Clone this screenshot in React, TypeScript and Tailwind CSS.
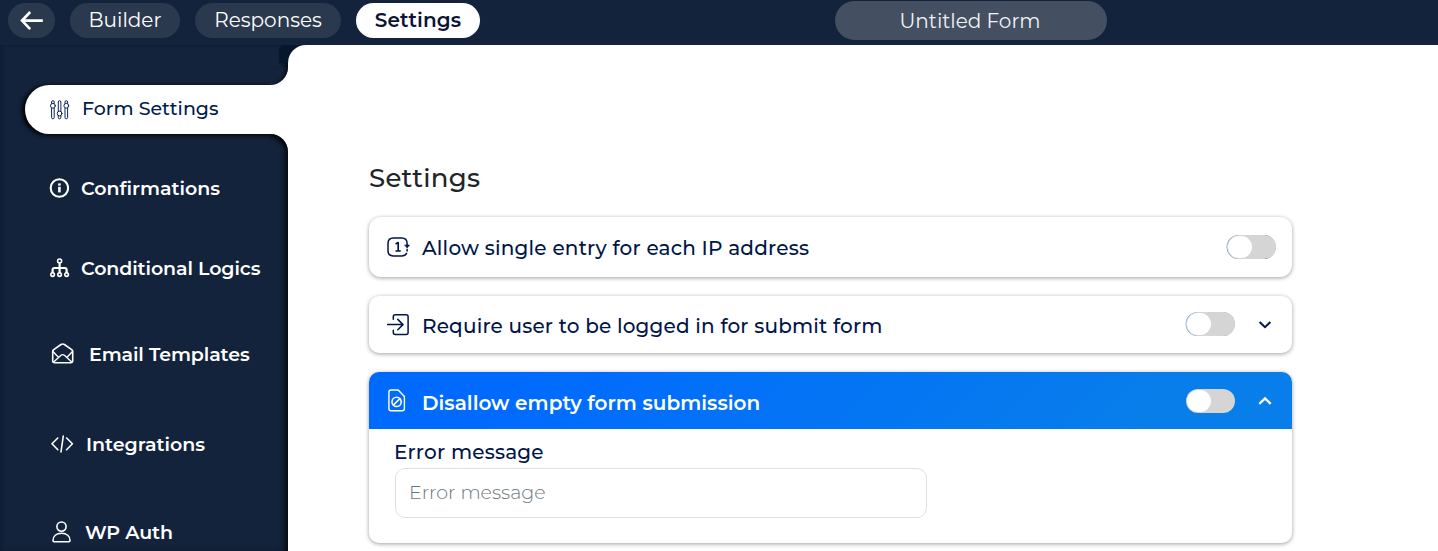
import type { ReactNode } from "react";

const stroke = {
  fill: "none",
  stroke: "currentColor",
  strokeLinecap: "round" as const,
  strokeLinejoin: "round" as const,
};

function BackIcon() {
  return (
    <svg width="24" height="20" viewBox="0 0 24 20" {...stroke} strokeWidth="2.6">
      <path d="M22.8 9.6H2M10.2 1L2 9.6l8.2 8.6" strokeLinecap="butt" strokeLinejoin="miter" />
    </svg>
  );
}

function SlidersIcon() {
  return (
    <svg width="20" height="20" viewBox="0 0 20 20" {...stroke} strokeWidth="0.95">
      <path d="M1.6 3.4V2a1.3 1.3 0 0 1 2.6 0v1.4M1.6 8.3v9.2a1.3 1.3 0 0 0 2.6 0V8.3" />
      <circle cx="2.9" cy="5.8" r="2.4" />
      <path d="M8.3 11V2a1.3 1.3 0 0 1 2.6 0v9M8.3 16v1.5a1.3 1.3 0 0 0 2.6 0V16" />
      <circle cx="9.6" cy="13.5" r="2.4" />
      <path d="M15 3.4V2a1.3 1.3 0 0 1 2.6 0v1.4M15 8.3v9.2a1.3 1.3 0 0 0 2.6 0V8.3" />
      <circle cx="16.3" cy="5.8" r="2.4" />
    </svg>
  );
}

function InfoIcon() {
  return (
    <svg width="20" height="20" viewBox="0 0 20 20" {...stroke} strokeWidth="2.1">
      <circle cx="10.4" cy="10" r="8.7" />
      <path d="M10.4 8.8v5.6" strokeWidth="2.6" strokeLinecap="butt" />
      <path d="M10.4 5.4v2.2" strokeWidth="2.6" strokeLinecap="butt" />
    </svg>
  );
}

function TreeIcon() {
  return (
    <svg width="20" height="20" viewBox="0 0 20 20" {...stroke} strokeWidth="1.6">
      <circle cx="9.6" cy="3" r="2" />
      <path d="M9.6 5v9.5M2.6 14.5v-2.7q0-1.8 1.8-1.8h10.4q1.8 0 1.8 1.8v2.7" strokeWidth="2.2" />
      <circle cx="2.6" cy="16.6" r="1.8" />
      <circle cx="9.6" cy="16.6" r="1.8" />
      <circle cx="16.6" cy="16.6" r="1.8" />
    </svg>
  );
}

function MailOpenIcon() {
  return (
    <svg width="23" height="21" viewBox="0 0 23 21" {...stroke} strokeWidth="1.6">
      <path d="M1.7 8.2q0-.8.7-1.4L10 1.5q1.7-1 3.4 0L21 6.8q.7.6.7 1.4v9.6q0 1.9-1.9 1.9H3.6q-1.9 0-1.9-1.9z" />
      <path d="M1.9 8.6l5.5 5.6M21.5 8.6l-5.5 5.6M2.7 19l7.3-6.7q1.7-1.4 3.4 0l7.3 6.7" strokeWidth="1.4" />
    </svg>
  );
}

function CodeIcon() {
  return (
    <svg width="23" height="18" viewBox="0 0 23 18" {...stroke} strokeWidth="1.6">
      <path d="M6.8 3L1 8.8l5.8 5.9M15.6 3l5.8 5.8-5.8 5.9M12.3 1L10 17" />
    </svg>
  );
}

function UserIcon() {
  return (
    <svg width="20" height="22" viewBox="0 0 20 22" {...stroke} strokeWidth="1.6">
      <circle cx="9.5" cy="5.6" r="4.6" />
      <path d="M1 19.6c0-4.4 3.2-7.3 8.5-7.3s8.5 2.9 8.5 7.3q0 1.1-1.1 1.1H2.1Q1 20.7 1 19.6z" />
    </svg>
  );
}

function SingleEntryIcon() {
  return (
    <svg width="23" height="21" viewBox="0 0 23 21" {...stroke} strokeWidth="1.5">
      <path d="M20.1 8.2V6.4Q20.1 1 14.7 1H6.4Q1 1 1 6.4v7.1q0 5.4 5.4 5.4h8.3q3.6 0 4.9-2.5M20.1 12.6v1.3" />
      <path d="M17.9 8h4.6l-2.3 3z" fill="currentColor" strokeWidth=".6" />
      <path d="M8.6 7l2.6-1.4v8.3M8.4 14h5.4" strokeWidth="1.7" strokeLinecap="butt" />
    </svg>
  );
}

function LoginIcon() {
  return (
    <svg width="23" height="22" viewBox="0 0 23 22" {...stroke} strokeWidth="1.5">
      <path d="M6.3 5.2V2.8q0-2 2-2h10.8q2 0 2 2v15.8q0 2-2 2H8.3q-2 0-2-2v-2.4" />
      <path d="M.6 10.6h15.2M10.8 5.4l5.2 5.2-5.2 5.2" />
    </svg>
  );
}

function FileBlockIcon() {
  return (
    <svg width="18" height="24" viewBox="0 0 18 24" {...stroke} strokeWidth="1.4">
      <path d="M3 1h7.2l6.2 6.6v12q0 2.2-2.2 2.2H3Q.9 21.8.9 19.6V3.2Q.9 1 3 1z" />
      <circle cx="8.6" cy="12.9" r="4.6" strokeWidth="1.6" />
      <path d="M5.5 15.9l6.2-6" strokeWidth="1.6" />
    </svg>
  );
}

function Chevron({ up = false }: { up?: boolean }) {
  return (
    <svg width="14" height="10" viewBox="0 0 14 10" {...stroke} strokeWidth={up ? 2.3 : 2}>
      <path d={up ? "M1.3 7.8L7 2.3l5.7 5.5" : "M1.6 2L7 7.2 12.4 2"} strokeLinecap="butt" strokeLinejoin="miter" />
    </svg>
  );
}

function Toggle({ edge }: { edge: string }) {
  return (
    <span className={`flex h-6 w-[49px] shrink-0 items-center rounded-full bg-[#d5d5d5] pl-px ${edge}`}>
      <span className="h-[22px] w-6 rounded-full bg-white" />
    </span>
  );
}

type NavItem = { label: string; icon: ReactNode; row: string; text: string };

const items: NavItem[] = [
  { label: "Confirmations", icon: <InfoIcon />, row: "h-20 pl-[49px] gap-3", text: "pt-0.5" },
  { label: "Conditional Logics", icon: <TreeIcon />, row: "h-20 pl-[50px] gap-[11px]", text: "pt-0.5 tracking-[-0.1px]" },
  { label: "Email Templates", icon: <MailOpenIcon />, row: "h-[91px] pl-[51px] gap-[15px]", text: "pt-1 tracking-[-0.1px]" },
  { label: "Integrations", icon: <CodeIcon />, row: "h-[89px] pl-[51px] gap-3", text: "pt-1" },
  { label: "WP Auth", icon: <UserIcon />, row: "h-[87px] pl-[52px] gap-[13px]", text: "pt-1 tracking-[-0.1px]" },
];

const card = "rounded-[10px] bg-white shadow-[0_1px_4px_rgba(0,0,0,0.38)]";

export default function App() {
  return (
    <div className="flex h-[551px] w-[1438px] flex-col overflow-hidden bg-white font-['Montserrat','Inter',sans-serif]">
      <header className="flex h-[45px] shrink-0 items-start bg-[#13233b] pl-2 text-[20px] leading-[35px] text-white">
        <button className="mt-[3px] flex h-[35px] w-[47px] items-center justify-center rounded-full bg-[#2b394f]">
          <BackIcon />
        </button>
        <button className="mt-[3px] ml-[15px] h-[35px] w-[110px] rounded-full bg-[#2b394f]">Builder</button>
        <button className="mt-[3px] ml-[15px] h-[35px] w-[146px] rounded-full bg-[#2b394f]">Responses</button>
        <button className="mt-[3px] ml-[15px] h-[35px] w-[124px] rounded-full bg-white font-semibold tracking-[0.15px] text-[#0b1437]">Settings</button>
        <div className="mt-px ml-[355px] h-[39px] w-[272px] rounded-full bg-[#444f62] pr-0.5 text-center leading-[40px] text-[#f0f2f5]">
          Untitled Form
        </div>
      </header>

      <div className="flex min-h-0 flex-1">
        <aside className="relative flex w-72 shrink-0 flex-col bg-[#13233b] pt-10 text-white shadow-[inset_-7px_0_7px_-5px_#000,inset_3px_0_5px_-3px_#0c1830]">
          <span className="absolute top-0 right-0 h-[18px] w-[9px] rounded-tl-[6px] bg-[#05162d]" />
          <div className="relative ml-[25px] flex h-[49px] shrink-0 items-center gap-[12px] rounded-l-full bg-white pl-[25px] text-[#001a4d] shadow-[-3px_1px_4px_#000]">
            <SlidersIcon />
            <span className="text-[19px] font-medium whitespace-nowrap">Form Settings</span>
            <span className="absolute right-0 bottom-full size-[18px] bg-white">
              <span className="block size-full rounded-br-[18px] bg-[#13233b] shadow-[inset_-5px_0_5px_-4px_#000]" />
            </span>
            <span className="absolute top-full right-0 size-[18px] bg-white">
              <span className="block size-full rounded-tr-[18px] bg-[#13233b] shadow-[inset_-5px_5px_5px_-4px_#000]" />
            </span>
          </div>
          <nav className="flex shrink-0 flex-col pt-[14px]">
            {items.map((item) => (
              <div key={item.label} className={`flex shrink-0 items-center ${item.row}`}>
                {item.icon}
                <span className={`text-[19px] font-semibold whitespace-nowrap ${item.text}`}>{item.label}</span>
              </div>
            ))}
          </nav>
        </aside>

        <div className="relative flex min-w-0 flex-1 bg-[#05162d]">
          <main className="flex flex-1 flex-col rounded-tl-[18px] bg-white pt-[117px] pl-[81px] text-[20px] text-[#001648]">
            <h1 className="mb-[22px] h-[33px] text-[26px] leading-[33px] font-medium tracking-[0.25px] text-[#212529]">Settings</h1>

            <section className="flex h-[60px] w-[923px] shrink-0 items-center rounded-[12px] bg-white pr-4 pl-[18px] shadow-[0_1px_4px_rgba(0,0,0,0.38)]">
              <SingleEntryIcon />
              <span className="mt-px ml-3 flex-1 font-medium tracking-[0.2px]">Allow single entry for each IP address</span>
              <Toggle edge="shadow-[-0.3px_0_0_#3b6fc7]" />
            </section>

            <section className={`mt-[19px] flex h-[57px] w-[923px] shrink-0 items-center pr-5 pl-[18px] ${card}`}>
              <LoginIcon />
              <span className="mt-0.5 ml-3 flex-1 font-medium tracking-[0.17px]">Require user to be logged in for submit form</span>
              <Toggle edge="mb-px shadow-[-0.3px_0_0_#3b82f6]" />
              <span className="ml-[23px]"><Chevron /></span>
            </section>

            <section className={`mt-[19px] h-[171px] w-[923px] shrink-0 overflow-hidden ${card}`}>
              <div className="flex h-[57px] items-center bg-[linear-gradient(135deg,#006aff_0%,#006aff_15%,#087eea_85%,#087eea_100%)] pr-5 pl-[19px] text-white">
                <FileBlockIcon />
                <span className="mt-[5px] ml-4 flex-1 font-semibold tracking-[0.03px]">Disallow empty form submission</span>
                <Toggle edge="" />
                <span className="ml-[23px]"><Chevron up /></span>
              </div>
              <div className="flex flex-col pt-[9px] pl-[25px]">
                <label htmlFor="error-message" className="h-[30px] leading-[29px] font-medium tracking-[0.2px]">Error message</label>
                <input
                  id="error-message"
                  placeholder="Error message"
                  className="ml-px h-[50px] w-[532px] rounded-[10px] border border-[#dfdfdf] px-[13px] pb-0.5 text-[19px] font-light outline-none placeholder:text-[#6c757d]"
                />
              </div>
            </section>
          </main>
        </div>
      </div>
    </div>
  );
}
